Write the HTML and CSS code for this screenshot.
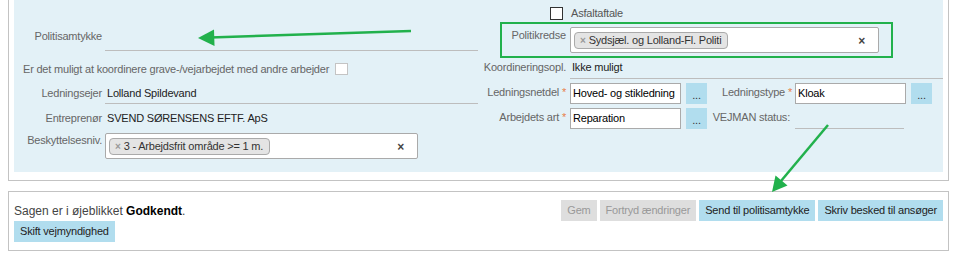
FILE: index.html
```html
<!DOCTYPE html>
<html lang="da">
<head>
<meta charset="utf-8">
<title>Sag</title>
<link rel="stylesheet" href="styles.css">
</head>
<body>
<div class="page">
  <div class="panel form-panel">
    <div class="form">
      <!-- row 0 -->
      <div></div>
      <div></div>
      <div class="cb-cell"><span class="checkbox dark"></span></div>
      <div class="cb-text">Asfaltaftale</div>

      <!-- row 1 -->
      <div class="lbl lbl-tall">Politisamtykke</div>
      <div class="val val-tall"></div>
      <div class="rlbl rlbl-sel">Politikredse</div>
      <div class="sel-cell">
        <div class="select select-r">
          <span class="chip"><span class="chip-x">×</span>Sydsjæl. og Lolland-Fl. Politi</span>
          <span class="clear">×</span>
        </div>
      </div>

      <!-- row 2 -->
      <div class="lbl-long">Er det muligt at koordinere grave-/vejarbejdet med andre arbejder <span class="checkbox light"></span></div>
      <div class="rlbl">Koordineringsopl.</div>
      <div class="val val-r">Ikke muligt</div>

      <!-- row 3 -->
      <div class="lbl">Ledningsejer</div>
      <div class="val">Lolland Spildevand</div>
      <div class="rlbl">Ledningsnetdel <span class="req">*</span></div>
      <div class="igroup">
        <div class="input">Hoved- og stikledning</div>
        <div class="dots">...</div>
        <div class="ilbl">Ledningstype <span class="req">*</span></div>
        <div class="input">Kloak</div>
        <div class="dots">...</div>
      </div>

      <!-- row 4 -->
      <div class="lbl">Entreprenør</div>
      <div class="val val-plain">SVEND SØRENSENS EFTF. ApS</div>
      <div class="rlbl">Arbejdets art <span class="req">*</span></div>
      <div class="igroup">
        <div class="input">Reparation</div>
        <div class="dots">...</div>
        <div class="ilbl ilbl-plain">VEJMAN status:</div>
        <div class="val val-short"></div>
      </div>

      <!-- row 5 -->
      <div class="lbl lbl-top">Beskyttelsesniv.</div>
      <div class="sel-cell">
        <div class="select select-l">
          <span class="chip"><span class="chip-x">×</span>3 - Arbejdsfrit område &gt;= 1 m.</span>
          <span class="clear">×</span>
        </div>
      </div>
      <div></div>
      <div></div>
    </div>
  </div>

  <div class="panel status-panel">
    <div class="status-row">
      <div class="status-text">Sagen er i øjeblikket <b>Godkendt</b>.</div>
      <div class="btns">
        <span class="btn disabled">Gem</span>
        <span class="btn disabled">Fortryd ændringer</span>
        <span class="btn">Send til politisamtykke</span>
        <span class="btn">Skriv besked til ansøger</span>
      </div>
    </div>
    <div class="status-row2">
      <span class="btn">Skift vejmyndighed</span>
    </div>
  </div>

  <svg class="annot" width="971" height="261" viewBox="0 0 971 261" aria-hidden="true">
    <rect x="501" y="23" width="391" height="34" fill="none" stroke="#22b14c" stroke-width="2"/>
    <line x1="411" y1="31" x2="210" y2="37.5" stroke="#22b14c" stroke-width="2.5"/>
    <polygon points="198,38 214,29.5 214.5,46" fill="#22b14c"/>
    <line x1="828" y1="125" x2="781" y2="181" stroke="#22b14c" stroke-width="2.5"/>
    <polygon points="772,192 775.5,175.5 787.5,185.5" fill="#22b14c"/>
  </svg>
</div>
</body>
</html>
```

FILE: styles.css
```css
* { box-sizing: border-box; }

html, body {
  margin: 0;
  padding: 0;
  background: #fff;
}

body {
  font-family: "Liberation Sans", Arial, sans-serif;
  font-size: 11px;
  letter-spacing: -0.2px;
  color: #222;
}

.page {
  position: relative;
  width: 971px;
  height: 261px;
  padding-left: 8px;
}

.panel {
  width: 941px;
  border: 1px solid #c3c3c3;
  background: #fff;
}

.form-panel {
  border-top: 0;
  padding: 0 5px 8px 5px;
}

.form {
  display: grid;
  grid-template-columns: 91px 373px 92px 373px;
  grid-template-rows: 22px 36px 25px 25px 25px 26px;
  align-items: start;
  background: #e3f1f7;
  padding-bottom: 13px;
}

/* row 0 */
.cb-cell {
  display: flex;
  justify-content: flex-end;
  padding: 7px 7px 0 0;
}

.cb-text {
  padding: 2px 0 0 1px;
  line-height: 22px;
  color: #555;
}

.checkbox {
  display: inline-block;
  width: 13px;
  height: 13px;
  background: #fff;
}

.checkbox.dark { border: 1px solid #333; }
.checkbox.light {
  border: 1px solid #c4c4c4;
  height: 12px;
  margin-left: 6px;
}

/* left labels & values */
.lbl {
  text-align: right;
  padding-right: 3px;
  line-height: 20px;
  color: #666;
  white-space: nowrap;
}

.lbl-tall { line-height: 28px; }
.lbl-top { line-height: 14px; }

.val {
  height: 21px;
  line-height: 20px;
  padding-left: 2px;
  border-bottom: 1px solid #bdbdbd;
  color: #222;
  white-space: nowrap;
}

.val-tall { height: 29px; }
.val-plain { border-bottom: 0; }
.val-r { line-height: 19px; }
.val-short { width: 109px; }

.lbl-long {
  grid-column: span 2;
  display: flex;
  align-items: center;
  height: 21px;
  padding-left: 9px;
  color: #666;
  white-space: nowrap;
}

/* right labels */
.rlbl {
  text-align: right;
  padding-right: 4px;
  line-height: 18px;
  color: #666;
  white-space: nowrap;
}

.rlbl-sel { margin-top: 4px; }

.req { color: #e8804a; }

/* select2-like controls */
.sel-cell { padding-top: 0; }
.select-r { margin-top: 5px; width: 309px; }
.select-l { width: 313px; }

.select {
  display: flex;
  align-items: flex-start;
  height: 26px;
  padding: 4px 0 0 3px;
  border: 1px solid #aaa;
  border-radius: 2px;
  background: #fff;
}

.chip {
  display: inline-flex;
  align-items: center;
  height: 17px;
  padding: 0 6px 0 5px;
  border: 1px solid #aaa;
  border-radius: 4px;
  background: #e4e4e4;
  color: #333;
  line-height: 15px;
  white-space: nowrap;
}

.chip-x {
  color: #999;
  font-weight: bold;
  font-size: 10px;
  margin-right: 3px;
}

.clear {
  margin-left: auto;
  margin-right: 13px;
  margin-top: 2px;
  font-weight: bold;
  font-size: 12px;
  color: #444;
}

/* inputs */
.igroup {
  display: flex;
  align-items: flex-start;
}

.input {
  width: 111px;
  height: 21px;
  padding: 0 2px;
  border: 1px solid #aaa;
  background: #fff;
  line-height: 19px;
  color: #000;
  white-space: nowrap;
  overflow: hidden;
}

.dots {
  width: 21px;
  height: 21px;
  margin-left: 5px;
  background: #b1ddee;
  text-align: center;
  line-height: 24px;
  color: #333;
}

.ilbl {
  width: 88px;
  text-align: right;
  padding-right: 3px;
  line-height: 18px;
  color: #666;
  white-space: nowrap;
}

.ilbl-plain { padding-right: 5px; }

/* status panel */
.status-panel {
  margin-top: 10px;
  padding: 8px 5px 8px 5px;
}

.status-row {
  display: flex;
  align-items: center;
  height: 21px;
}

.status-text {
  flex: 1;
  font-size: 12px;
  letter-spacing: 0;
  color: #444;
}

.status-text b { color: #000; }

.btns {
  display: flex;
  gap: 3px;
}

.btn {
  display: inline-block;
  height: 21px;
  padding: 0 6px;
  line-height: 21px;
  background: #b1ddee;
  color: #222;
  white-space: nowrap;
}

.btn.disabled {
  background: #dedede;
  color: #999;
}

.status-row2 {
  display: flex;
  height: 21px;
}

/* annotation overlay */
.annot {
  position: absolute;
  left: 0;
  top: 0;
  pointer-events: none;
}
```
